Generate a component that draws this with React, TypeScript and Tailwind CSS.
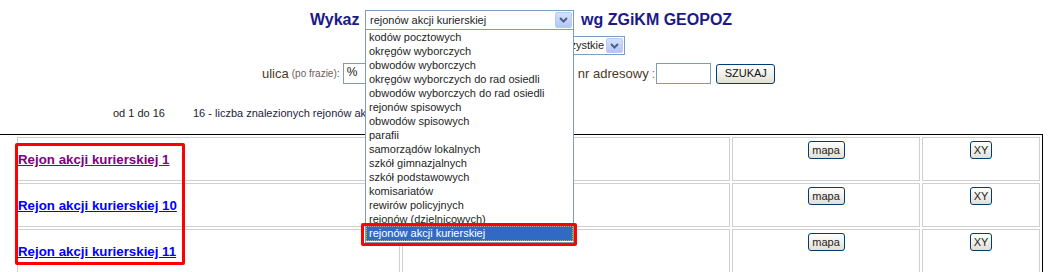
import React from "react";

const options = [
  "kodów pocztowych",
  "okręgów wyborczych",
  "obwodów wyborczych",
  "okręgów wyborczych do rad osiedli",
  "obwodów wyborczych do rad osiedli",
  "rejonów spisowych",
  "obwodów spisowych",
  "parafii",
  "samorządów lokalnych",
  "szkół gimnazjalnych",
  "szkół podstawowych",
  "komisariatów",
  "rewirów policyjnych",
  "rejonów (dzielnicowych)",
];

function Arrow() {
  return (
    <div className="h-full w-[17px] rounded-[2px] border border-[#b9cbf3] bg-linear-to-b from-[#d4e0fc] to-[#b3c7f5] flex items-center justify-center">
      <svg width="9" height="6" viewBox="0 0 9 6">
        <path d="M1 1 L4.5 4.5 L8 1" fill="none" stroke="#4d6185" strokeWidth="2" />
      </svg>
    </div>
  );
}

function XpButton({ label, w }: { label: string; w: string }) {
  return (
    <div
      className={`${w} h-[18px] rounded-[3px] border border-[#003c74] bg-linear-to-b from-white to-[#e3e0d3] flex items-center justify-center text-[11px] text-[#222]`}
    >
      {label}
    </div>
  );
}

const rows = [
  { label: "Rejon akcji kurierskiej 1", visited: true },
  { label: "Rejon akcji kurierskiej 10", visited: false },
  { label: "Rejon akcji kurierskiej 11", visited: false },
];

export default function App() {
  return (
    <div className="relative w-[1048px] h-[272px] overflow-hidden bg-white font-['Liberation_Sans',Arial,sans-serif]">
      {/* Header */}
      <div className="flex items-center h-5 mt-[10px] pl-[310px]">
        <span className="text-[16px] font-bold text-[#1a1a88] w-[55px] leading-5">Wykaz</span>
        <div className="w-[209px] h-5 border border-[#7f9db9] bg-white flex items-center p-px">
          <span className="pl-[3px] text-[11px] text-[#222] flex-1">rejonów akcji kurierskiej</span>
          <Arrow />
        </div>
        <span className="ml-[7px] text-[16px] font-bold text-[#1a1a88] leading-5">wg ZGiKM GEOPOZ</span>
      </div>

      {/* Row 2 */}
      <div className="flex mt-[6px] pl-[540px]">
        <div className="w-[85px] h-[19px] border border-[#7f9db9] bg-white flex items-center p-px">
          <span className="pl-[3px] text-[11px] text-[#222] flex-1 text-right pr-[2px]">wszystkie</span>
          <Arrow />
        </div>
      </div>

      {/* Row 3 */}
      <div className="flex items-center h-[21px] mt-[8px] pl-[262px]">
        <span className="text-[13px] text-[#4b3a1f]">ulica</span>
        <span className="ml-[3px] text-[10px] text-[#6b5d57]">(po frazie)</span>
        <span className="text-[11px] text-[#6b5d57]">:</span>
        <div className="ml-[3px] w-[231px] h-[21px] border border-[#7f9db9] bg-white text-[12px] text-[#222] pl-[3px] leading-[17px]">
          %
        </div>
        <span className="ml-[4px] text-[13px] text-[#4b3a1f]">nr adresowy</span>
        <span className="ml-[3px] text-[13px] text-[#b0508a]">:</span>
        <div className="ml-[1px] w-[55px] h-[21px] border border-[#7f9db9] bg-white" />
        <div className="ml-[5px] w-[59px] h-[20px] rounded-[3px] border border-[#003c74] bg-linear-to-b from-white to-[#e3e0d3] flex items-center justify-center text-[11px] text-[#111]">
          SZUKAJ
        </div>
      </div>

      {/* Row 4 */}
      <div className="flex items-center h-[13px] mt-[23px] pl-[113px] text-[11px] text-[#222]">
        <span className="w-[80px]">od 1 do 16</span>
        <span className="w-[172px] overflow-hidden whitespace-nowrap text-[#1c1c3a]">16 - liczba znalezionych rejonów akcji kurierskiej</span>
      </div>

      {/* Table */}
      <div className="mt-[14px] w-[1043px] border-t border-r border-black pl-[17px] pt-[2px] pr-[2px]">
        <div className="grid grid-cols-[383px_328px_188px_118px] auto-rows-[44px] gap-[2px]">
          {rows.map((r) => (
            <React.Fragment key={r.label}>
              <div className="border border-[#d0d0d0] pt-[9px]">
                <span
                  className={`text-[13.3px] font-bold underline ${r.visited ? "text-[#800080]" : "text-[#0000ff]"}`}
                >
                  {r.label}
                </span>
              </div>
              <div className="border border-[#d0d0d0]" />
              <div className="border border-[#d0d0d0] flex justify-center pt-[3px]">
                <XpButton label="mapa" w="w-[37px]" />
              </div>
              <div className="border border-[#d0d0d0] flex justify-center pt-[3px]">
                <XpButton label="XY" w="w-[22px]" />
              </div>
            </React.Fragment>
          ))}
        </div>
      </div>

      {/* Open dropdown list */}
      <div className="absolute left-[365px] top-[30px] w-[209px] border-x border-b border-[#7f9db9] bg-white pb-px">
        {options.map((o) => (
          <div key={o} className="h-[14px] leading-[14px] pl-[3px] text-[11px] text-[#1e1e1e] whitespace-nowrap">
            {o}
          </div>
        ))}
        <div className="h-[15px] leading-[13px] pl-[2px] text-[11px] text-white bg-[#316ac5] border border-dotted border-[#d8a850]">
          rejonów akcji kurierskiej
        </div>
      </div>

      {/* Annotation boxes */}
      <div className="absolute left-[361px] top-[223px] w-[216px] h-[23px] border-[3px] border-[#ff0000] rounded-[2px]" />
      <div className="absolute left-[15px] top-[143px] w-[170px] h-[122px] border-[3px] border-[#ff0000] rounded-[2px]" />
    </div>
  );
}
